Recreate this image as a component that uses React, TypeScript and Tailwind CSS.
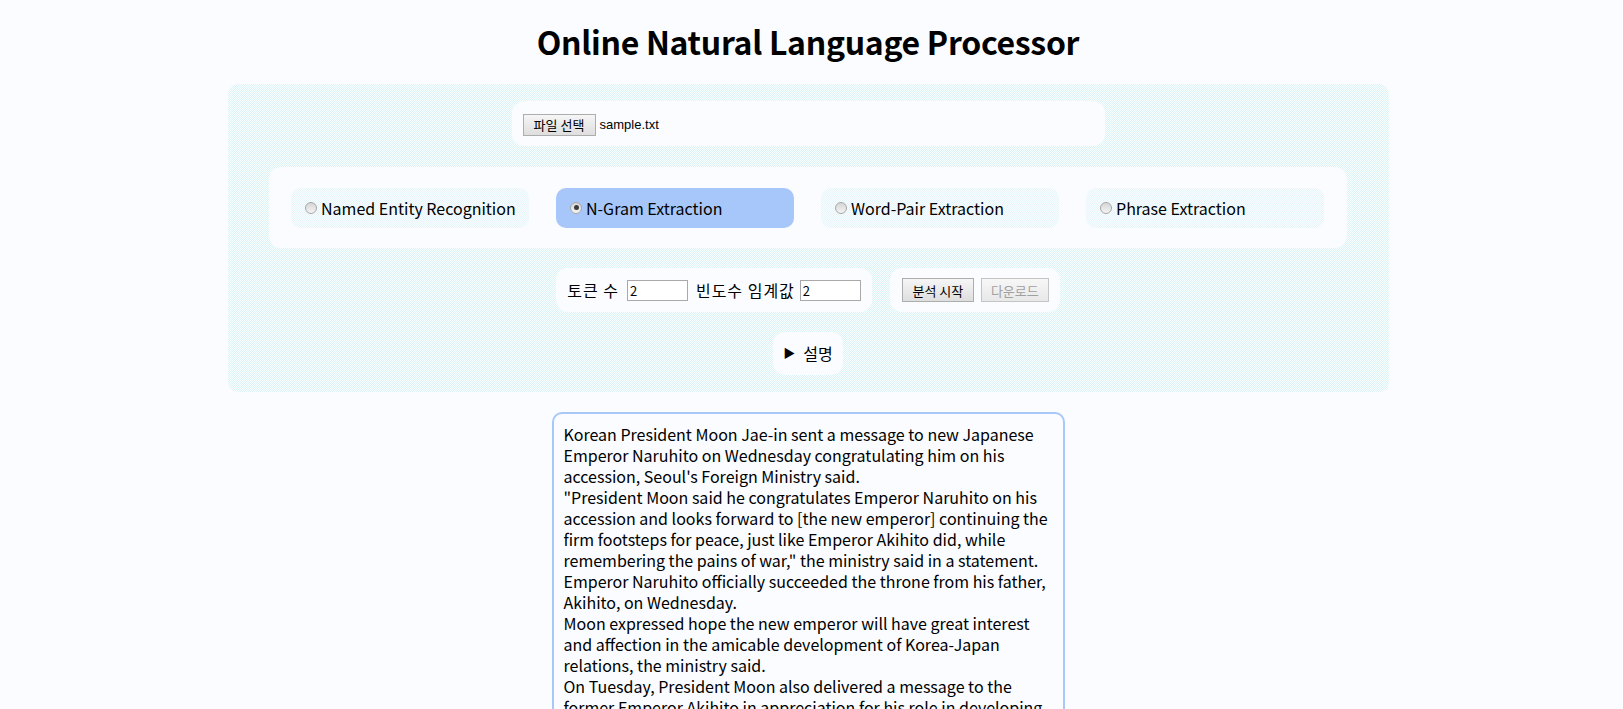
import { useState } from 'react';

const tasks = ['Named Entity Recognition', 'N-Gram Extraction', 'Word-Pair Extraction', 'Phrase Extraction'];

const sampleText = `Korean President Moon Jae-in sent a message to new Japanese Emperor Naruhito on Wednesday congratulating him on his accession, Seoul's Foreign Ministry said.
"President Moon said he congratulates Emperor Naruhito on his accession and looks forward to [the new emperor] continuing the firm footsteps for peace, just like Emperor Akihito did, while remembering the pains of war," the ministry said in a statement.
Emperor Naruhito officially succeeded the throne from his father, Akihito, on Wednesday.
Moon expressed hope the new emperor will have great interest and affection in the amicable development of Korea-Japan relations, the ministry said.
On Tuesday, President Moon also delivered a message to the former Emperor Akihito in appreciation for his role in developing bilateral relations.`;

function Radio({ checked }: { checked: boolean }) {
  return (
    <span className="flex h-[12px] w-[12px] items-center justify-center rounded-full border border-[#a8a8a8] bg-gradient-to-b from-[#d6d6d6] to-[#f4f4f4]">
      {checked && <span className="h-[5px] w-[5px] rounded-full bg-[#3c3c3c]" />}
    </span>
  );
}

export default function App() {
  const [task, setTask] = useState(1);

  return (
    <div className="min-h-screen bg-[#fafcff] pr-[7px] font-['Noto_Sans_CJK_KR',sans-serif] text-black">
      <h1 className="pt-[19px] text-center text-[32px] font-bold leading-[44px] tracking-[-0.3px]">
        Online Natural Language Processor
      </h1>

      <div className="mx-auto mt-[21px] flex w-[1161px] flex-col items-center rounded-[10px] bg-[repeating-conic-gradient(#dbf2f7_0%_25%,#fbfeff_0%_50%)] bg-[length:2px_2px] py-[17px]">
        <div className="flex h-[45px] w-[593px] items-center rounded-[12px] bg-[#fafcff] pl-[11px] pt-[2px]">
          <button className="h-[22px] w-[73px] border border-[#adadad] bg-gradient-to-b from-[#f6f6f6] to-[#dedede] text-[13px] leading-none">
            파일 선택
          </button>
          <span className="ml-[4px] font-['Liberation_Sans',sans-serif] text-[13px]">sample.txt</span>
        </div>

        <div className="mt-[21px] flex h-[81px] w-[1078px] items-center gap-[27px] rounded-[12px] bg-[#fafcff] pl-[22px]">
          {tasks.map((t, i) => (
            <label
              key={t}
              onClick={() => setTask(i)}
              className={
                i === task
                  ? 'flex h-[40px] w-[238px] cursor-pointer items-center gap-[4px] rounded-[10px] bg-[#a7c7fa] pl-[14px] text-[16px]'
                  : 'flex h-[40px] w-[238px] cursor-pointer items-center gap-[4px] rounded-[10px] bg-[repeating-conic-gradient(#e5f5f9_0%_25%,#fafdff_0%_50%)] bg-[length:2px_2px] pl-[14px] text-[16px]'
              }
            >
              <Radio checked={i === task} />
              {t}
            </label>
          ))}
        </div>

        <div className="mt-[20px] flex gap-[18px]">
          <div className="flex h-[44px] items-center rounded-[12px] bg-[#fafcff] px-[11px] text-[16px]">
            <span className="tracking-[1px]">토큰 수</span>
            <input
              defaultValue="2"
              className="ml-[8px] h-[21px] w-[61px] border border-[#a9a9a9] bg-white px-[2px] text-[13px] outline-none"
            />
            <span className="ml-[8px] tracking-[1px]">빈도수 임계값</span>
            <input
              defaultValue="2"
              className="ml-[5px] h-[21px] w-[61px] border border-[#a9a9a9] bg-white px-[2px] text-[13px] outline-none"
            />
          </div>
          <div className="flex h-[44px] items-center gap-[7px] rounded-[12px] bg-[#fafcff] pl-[12px] pr-[11px]">
            <button className="h-[24px] w-[72px] border border-[#adadad] bg-gradient-to-b from-[#f6f6f6] to-[#dedede] text-[13px] leading-none">
              분석 시작
            </button>
            <button
              disabled
              className="h-[24px] w-[68px] border border-[#c4c4c4] bg-gradient-to-b from-[#f7f7f7] to-[#e8e8e8] text-[13px] leading-none text-[#a0a0a0]"
            >
              다운로드
            </button>
          </div>
        </div>

        <div className="mt-[20px] flex h-[43px] items-center gap-[8px] rounded-[12px] bg-[#fafcff] px-[10px] pb-[2px] text-[16px]">
          <span className="text-[12px]">▶</span>
          <span>설명</span>
        </div>
      </div>

      <div className="mt-[20px] flex justify-center">
        <textarea
          readOnly
          value={sampleText}
          className="h-[420px] w-[513px] resize-none overflow-hidden rounded-[10px] border-2 border-[#a8c8f8] bg-[#fafcff] px-[10px] py-[10px] text-[16px] leading-[21px] outline-none"
        />
      </div>
    </div>
  );
}
